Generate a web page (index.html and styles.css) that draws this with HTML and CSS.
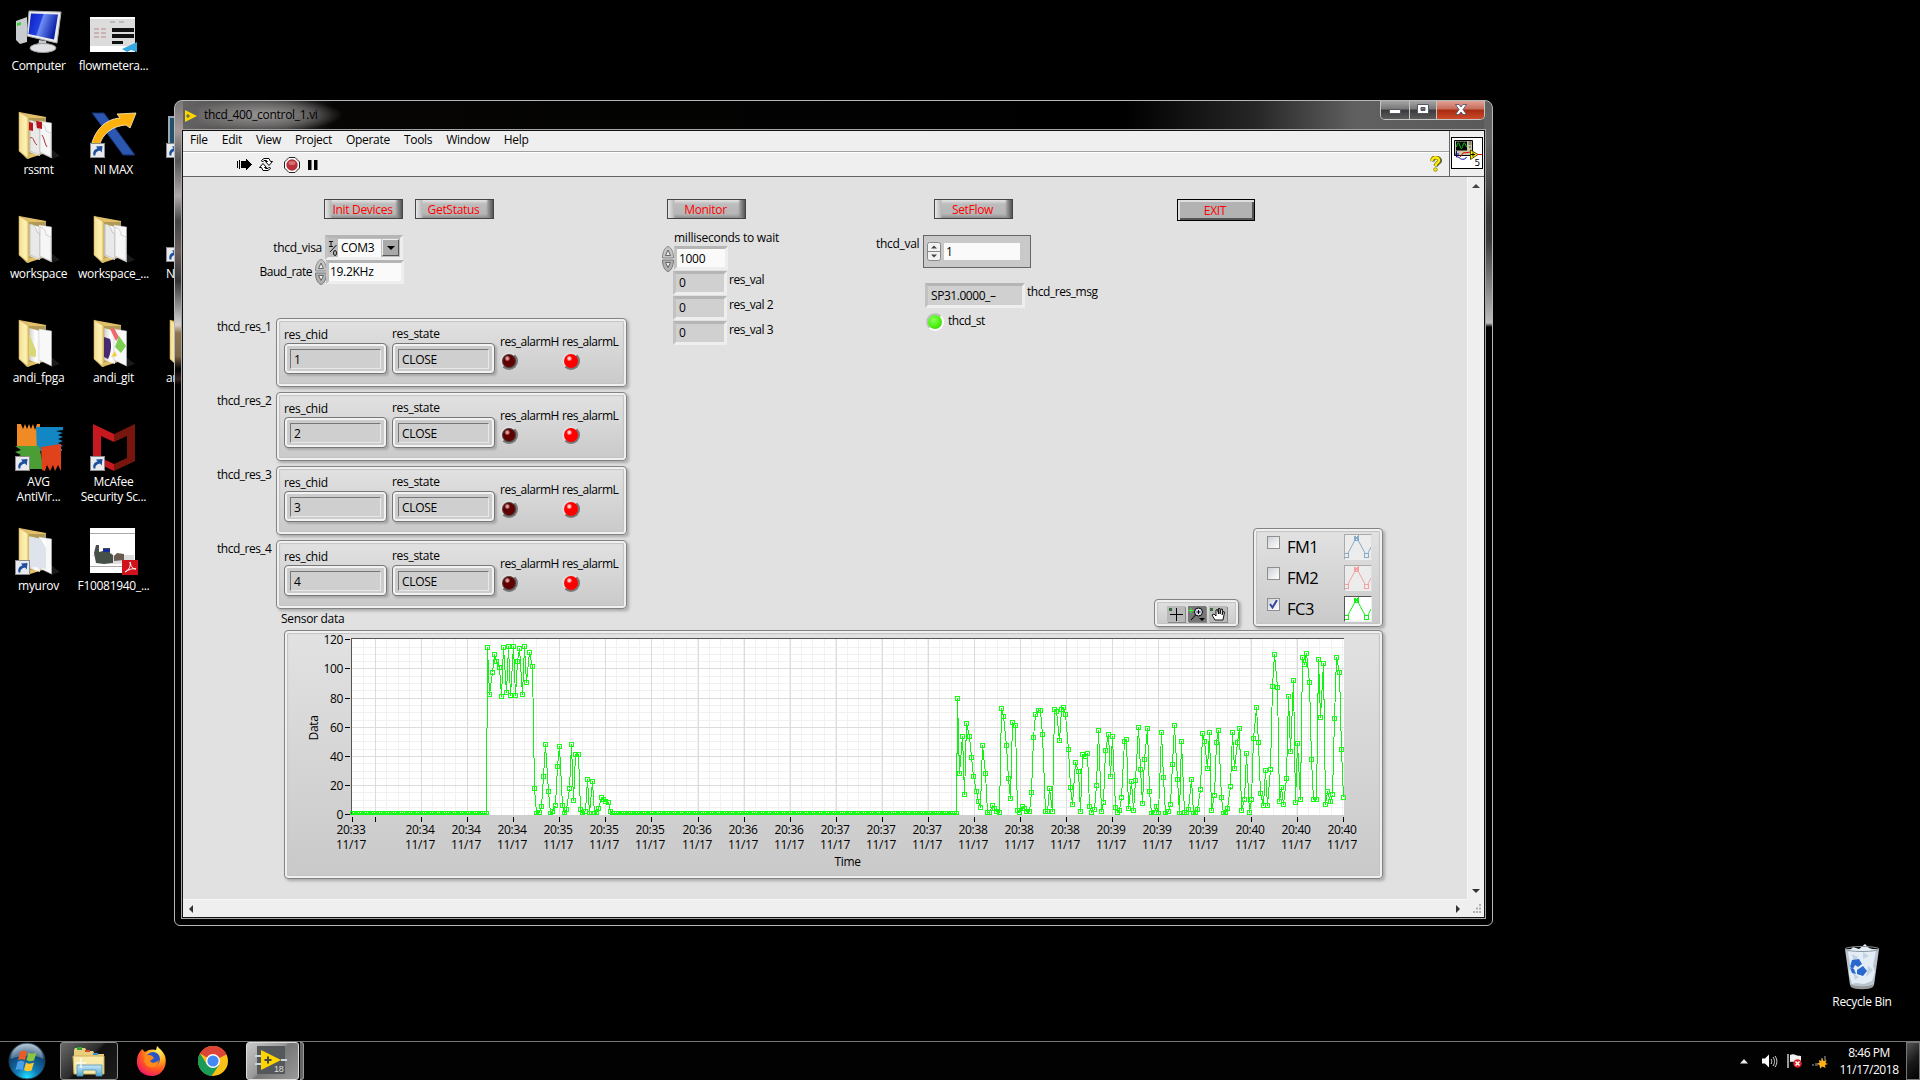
FILE: index.html
```html
<!DOCTYPE html>
<html lang="en">
<head>
<meta charset="utf-8">
<title>thcd_400_control_1.vi</title>
<link rel="stylesheet" href="styles.css">
</head>
<body>
<svg class="defs" width="0" height="0">
  <defs>
    <linearGradient id="gFold" x1="0" x2="1"><stop offset="0" stop-color="#f3dd94"/><stop offset=".7" stop-color="#fdf3b4"/><stop offset="1" stop-color="#d8b65c"/></linearGradient>
    <linearGradient id="gPage" x1="0" x2="1"><stop offset="0" stop-color="#cfcfcf"/><stop offset=".6" stop-color="#fff"/><stop offset="1" stop-color="#ececec"/></linearGradient>
    <linearGradient id="gScr" x1="0" x2="1" y2=".3"><stop offset="0" stop-color="#0a1cc0"/><stop offset=".45" stop-color="#2340e0"/><stop offset=".5" stop-color="#6f8df5"/><stop offset="1" stop-color="#0b1fa8"/></linearGradient>
    <radialGradient id="gOrb" cx=".5" cy=".95" r=".9"><stop offset="0" stop-color="#1fe0ff"/><stop offset=".35" stop-color="#1277b4"/><stop offset=".75" stop-color="#10426f"/><stop offset="1" stop-color="#8fa9bd"/></radialGradient>
    <radialGradient id="gFox" cx=".75" cy=".15" r=".95"><stop offset="0" stop-color="#fff36b"/><stop offset=".35" stop-color="#ffb01f"/><stop offset=".65" stop-color="#ff5a1f"/><stop offset="1" stop-color="#f0156a"/></radialGradient>
    <linearGradient id="gAero" x1="0" x2="0" y1="0" y2="1"><stop offset="0" stop-color="#c9e8f7"/><stop offset="1" stop-color="#4fa6d3"/></linearGradient>
    <symbol id="shortcut" viewBox="0 0 15 15"><rect x=".5" y=".5" width="14" height="14" fill="#e8eaee" stroke="#8b8b8b"/><path d="M3.500 12.500C2.500 8 5 6 7.500 5.500L6 3.500l6.500-.5-.8 6.500-1.700-2C7.500 8 5 9.500 5.500 12.500Z" fill="#1c4f9e"/></symbol>
    <symbol id="folder" viewBox="0 0 48 48"><path d="M36 38l9 7-9 3z" fill="#1a1a1a"/><path d="M4 1l27 5v36L12 48 4 40Z" fill="#e2c069"/><path d="M14 7l17 0v34l-17 2z" fill="#b09a55"/><path d="M14 9l11 3v33l-11-4z" fill="url(#gPage)"/><path d="M24 10l12.500 2v35L24 41Z" fill="#f8f8f8" stroke="#c9c9c9" stroke-width=".5"/><path d="M4 1l10 6v41L4 40Z" fill="url(#gFold)" stroke="#c9a552" stroke-width=".6"/></symbol>
    <symbol id="sheet" viewBox="0 0 48 48"><path d="M15 9c4 0 6 3 7 8l3 2v25l-10-4z" fill="#e9e9e9" stroke="#aaa" stroke-width=".6"/><path d="M25 12c4 1 6 4 6 8l5 2v24l-11-5z" fill="#f6f6f6" stroke="#b9b9b9" stroke-width=".6"/></symbol>
  </defs>
</svg>

<main class="desktop">
  <div class="icons">
    <div class="icon"><svg width="48" height="48"><path d="M1 14l11-4v25l-7 2-4-4z" fill="#c9cccf"/><path d="M2 16l4-1v3l-4 1z" fill="#3bd23b"/><path d="M14 4l32 1-4 31-30-7z" fill="#e9ebee" stroke="#aaa"/><path d="M16 6.500l27 1-4 25-25.500-5.500z" fill="url(#gScr)"/><path d="M24 33l7 1 1 5h-9z" fill="#c5c8cc"/><ellipse cx="28" cy="41" rx="13" ry="4.500" fill="#dfe1e4" stroke="#999"/></svg><span>Computer</span></div>
    <div class="icon"><svg width="48" height="48"><rect y="10" width="45" height="35" fill="#fff"/><path d="M0 12h45v27H0z" fill="#dcdcdc"/><path d="M22 21h22v4H22zM22 27h22v4H22zM22 34h11v3H22z" fill="#111"/><path d="M4 22h12M4 26h12M4 30h12" stroke="#b88" stroke-dasharray="5 2"/><path d="M20 15h18" stroke="#999" stroke-dasharray="5 4"/><path d="M32 42l15-7v10l-6-2-4 2z" fill="#35a8e0"/></svg><span>flowmetera...</span></div>
    <div class="icon"></div>

    <div class="icon"><svg width="48" height="48"><use href="#folder"/><use href="#sheet"/><path d="M14 11l4 1v8l-4-1zM21 10l6 1v7l-5-1z" fill="#b5141d"/><path d="M15 27c4-2 3 4 7 7M27 24c3 4 2 8 5 12" fill="none" stroke="#a33"/></svg><span>rssmt</span></div>
    <div class="icon"><svg width="48" height="48"><path d="M2 2h12l31 42H33Z" fill="#2c57b0" stroke="#15306e"/><path d="M1 36C4 20 15 8 30 7l-3-4 19-1-6 15-4-3C23 15 12 22 9 36Z" fill="#fdb10c" stroke="#fff2cc" stroke-width=".8"/><use href="#shortcut" x="0" y="32" width="15" height="15"/></svg><span>NI MAX</span></div>
    <div class="icon icon-part"><svg width="48" height="48"><path d="M2 5h20v30H2z" fill="#9aa8b5"/><path d="M4 7h16v26H4z" fill="#24506a"/><use href="#shortcut" x="0" y="32" width="15" height="15"/></svg></div>

    <div class="icon"><svg width="48" height="48"><use href="#folder"/><use href="#sheet"/></svg><span>workspace</span></div>
    <div class="icon"><svg width="48" height="48"><use href="#folder"/><use href="#sheet"/></svg><span>workspace_...</span></div>
    <div class="icon icon-part"><svg width="48" height="48"><use href="#shortcut" x="0" y="32" width="15" height="15"/></svg><span>NI VIS</span></div>

    <div class="icon"><svg width="48" height="48"><use href="#folder"/><path d="M14 15l7 16v7l-7-1z" fill="#d8d878"/></svg><span>andi_fpga</span></div>
    <div class="icon"><svg width="48" height="48"><use href="#folder"/><path d="M14 18l6 2c2 6 1 14-2 20l-4-2z" fill="#472a70"/><path d="M20 10l4-1 5 9-3 4z" fill="#f06a6a"/><path d="M29 17l7 10-5 7-6-6z" fill="#7ccf52"/><path d="M21 38l4-6 2 5z" fill="#f0d040"/></svg><span>andi_git</span></div>
    <div class="icon icon-part"><svg width="48" height="48"><use href="#folder"/></svg><span>andi</span></div>

    <div class="icon"><svg width="48" height="48"><path d="M2 1h4l2 5 2-5 2 5 2-5 2 5 2-5 2 6 2-6h3l-1 22H2z" fill="#f08a25"/><path d="M21 4h27v3l-7 1 7 2-5 2 5 2-5 2 5 2-5 2 5 3-6 2 5 1v2H22z" fill="#1386c4"/><path d="M0 23h24l5 23H0l5-3-5-2 6-3-6-3 6-3-6-3 6-2z" fill="#4a9e35"/><path d="M26 24l20-3v27l-3-6-3 6-2-6-3 6-3-6-2 6-3-1z" fill="#e0421c"/><use href="#shortcut" x="0" y="33" width="15" height="15"/></svg><span>AVG<br>AntiVir...</span></div>
    <div class="icon"><svg width="48" height="48"><path d="M3 1l21 10v8L11 13v22l13 6v7L3 38z" fill="#c5181f"/><path d="M45 1L24 11v8l13-6v22l-13 6v7l21-10z" fill="#77160f"/><use href="#shortcut" x="0" y="33" width="15" height="15"/></svg><span>McAfee<br>Security Sc...</span></div>
    <div class="icon"></div>

    <div class="icon"><svg width="48" height="48"><use href="#folder"/><path d="M14 10l12 2 5 6 0 24-17-3z" fill="#dfe3ec"/><path d="M26 12l5 2v7z" fill="#fff"/><use href="#shortcut" x="0" y="33" width="15" height="15"/></svg><span>myurov</span></div>
    <div class="icon"><svg width="48" height="48"><rect y="1" width="45" height="45" fill="#fff"/><path d="M0 6.500h45M0 39.500h45" stroke="#aaa"/><path d="M1 28h43v8l-20 1z" fill="#dcdcdc"/><path d="M4 26l2-8h3v7l4-1v-3h7v5l3 2v8l-9 1-8-1z" fill="#465048"/><path d="M24 29l3-3 7 1v6l-10 1z" fill="#6a5a50"/><path d="M13 22h7v3h-7z" fill="#1a2aa0"/><path d="M32 33h16v15H32z" fill="#d0121b"/><path d="M35 45c4-2 6-6 5-10 1 5 3 7 6 7-4-1-8 1-11 3z" fill="none" stroke="#fff"/></svg><span>F10081940_...</span></div>
    <div class="icon"></div>
  </div>

  <div class="bin"><svg width="48" height="48"><path d="M7 6h34l-5 36c-4 4-20 4-24 0z" fill="#b9c6d0"/><path d="M10 9l5-5 6 2 6-5 4 4 7 2-3 16 2 6-3 9-8 3-8-1-4 1-3-10 1-10z" fill="#e4edf6"/><path d="M14 11l6 3-4 6zM25 9l6 4-6 3zM30 23l5 4-7 7zM15 30l6 4-4 3z" fill="#c3d3e2"/><path d="M14 17l7-1 3 5-4 3-3-2-2 4-3-2zM19 27l6-4 4 5-4 5-6-2zM12 25l4 1 2 5-4-1z" fill="#2868cf"/><path d="M12 41c5 3 19 3 24 0l-1 3c-4 3-18 3-22 0z" fill="#9a9a9a"/><ellipse cx="24" cy="6" rx="17" ry="2.500" fill="none" stroke="#8a949c"/></svg><span>Recycle Bin</span></div>

  <section class="window">
    <header class="titlebar">
      <svg class="app" width="16" height="16"><rect width="16" height="16" fill="#616264"/><path d="M2 2l12 6L2 14z" fill="#ffd500"/><path d="M3 8h4M5 6v4" stroke="#555"/></svg>
      <h1>thcd_400_control_1.vi</h1>
      <div class="caption">
        <i class="min"><svg width="12" height="14"><rect x=".5" y="7.500" width="11" height="4" fill="#fff" stroke="#556"/></svg></i>
        <i class="max"><svg width="12" height="12"><path d="M.5 1.500h11v9H.5zM4 4.500h4v3H4z" fill="#fff" fill-rule="evenodd" stroke="#556"/></svg></i>
        <i class="close"><svg width="12" height="11"><path d="M.5.5h3.500L6 3 8 .5h3.500L8 5.500l3.500 5H8L6 8l-2 2.500H.5L4 5.500z" fill="#fff" stroke="#444a66" stroke-width=".8"/></svg></i>
      </div>
    </header>
    <div class="client">
      <div class="head">
        <div class="bars">
          <nav class="menu"><span>File</span><span>Edit</span><span>View</span><span>Project</span><span>Operate</span><span>Tools</span><span>Window</span><span>Help</span></nav>
          <div class="tools">
            <svg width="15" height="15" shape-rendering="crispEdges"><path d="M.5 4v7M2.500 3v9M4.500 4v7" stroke="#000"/><path d="M5 4h4V1l6 6.500L9 14v-3H5z"/></svg>
            <svg width="16" height="15" fill="#fff" stroke="#000"><path d="M3.500 3.500L6 1.500h5l1.500 3h2l-3.500 4-3.500-4h2L8.500 3.500H6L4.500 5z"/><path d="M12.500 11.500L10 13.500H5l-1.500-3H1.500L5 6.500l3.500 4h-2l1 1H10l1.500-1.500z"/></svg>
            <svg width="16" height="16"><path d="M5 .5h6L15.500 5v6L11 15.500H5L.5 11V5z" fill="#fff" stroke="#222"/><circle cx="8" cy="8" r="5.700" fill="#ba3038"/><ellipse cx="8" cy="6" rx="3.500" ry="2" fill="#d27077"/></svg>
            <svg width="10" height="10"><path d="M0 0h3.500v10H0zM6 0h3.500v10H6z"/></svg>
            <svg class="help" width="12" height="16"><path d="M3 5.500C3 0 11 1 10.500 5 10 7.500 6.500 7 6.500 10.500" fill="none" stroke="#555" stroke-width="3"/><path d="M2 5C2-.5 9.500.5 9 4.500 8.800 7 5.500 7 5.500 10" fill="none" stroke="#7a7200" stroke-width="3.600"/><path d="M2 5C2 0 9.500 1 9 4.500 8.800 7 5.500 7 5.500 10" fill="none" stroke="#ffee00" stroke-width="2.400"/><circle cx="5.500" cy="13.500" r="1.800" fill="#ffee00" stroke="#7a7200" stroke-width=".7"/></svg>
          </div>
        </div>
        <div class="vi">
          <svg width="32" height="32"><rect x=".5" y=".5" width="31" height="31" fill="#fff" stroke="#000"/><path d="M3.500 3.500h18v15h-18z" fill="#c9c7a5" stroke="#000"/><path d="M5 4.500h11v9H5z"/><path d="M5.500 10c1.500-6 2.500-5 3.500-1s2 3 3-1 2-2 3.500 2" fill="none" stroke="#12d012"/><path d="M17.500 5h3M17.500 7h3M18 10h2" stroke="#444"/><path d="M5.500 14v6h2c2 3 7 3 8 0M4 17h4" fill="none" stroke="#0a0a90"/><path d="M9 20l3-4 8-1M26 17.500h5" fill="none" stroke="#e00000"/><path d="M19.500 13l7.500 4.500-7.500 5z" fill="#ffee00" stroke="#555500"/><path d="M20 17.500h4M22 15.500v4" stroke="#000"/><text x="23.500" y="29" class="vi-num">5</text></svg>
        </div>
      </div>

      <div class="body">
        <div class="panel">
          <div class="upper">
            <div class="col-a">
              <div class="btns"><button>Init Devices</button><button>GetStatus</button></div>
              <div class="visa"><label>thcd_visa</label><div class="combo"><svg width="10" height="18"><path d="M1 2.500h4M3 2v5M1 7.500h4M8.500 6L2 13" stroke="#111" fill="none"/><ellipse cx="7" cy="14" rx="1.500" ry="2.500" fill="none" stroke="#111"/></svg><b>COM3</b><i><svg width="8" height="4"><path d="M0 0h8L4 4z"/></svg></i></div></div>
              <div class="baud"><label>Baud_rate</label><svg class="spin" width="12" height="26"><use href="#spin"/></svg><div class="field white">19.2KHz</div></div>
              <div class="clusters">
                <div class="res"><label>thcd_res_1</label><div class="cluster"><div class="c-id"><label>res_chid</label><p><b>1</b></p></div><div class="c-st"><label>res_state</label><p><b>CLOSE</b></p></div><div class="c-al"><label>res_alarmH</label><i class="led dark"></i></div><div class="c-al"><label>res_alarmL</label><i class="led red"></i></div></div></div>
                <div class="res"><label>thcd_res_2</label><div class="cluster"><div class="c-id"><label>res_chid</label><p><b>2</b></p></div><div class="c-st"><label>res_state</label><p><b>CLOSE</b></p></div><div class="c-al"><label>res_alarmH</label><i class="led dark"></i></div><div class="c-al"><label>res_alarmL</label><i class="led red"></i></div></div></div>
                <div class="res"><label>thcd_res_3</label><div class="cluster"><div class="c-id"><label>res_chid</label><p><b>3</b></p></div><div class="c-st"><label>res_state</label><p><b>CLOSE</b></p></div><div class="c-al"><label>res_alarmH</label><i class="led dark"></i></div><div class="c-al"><label>res_alarmL</label><i class="led red"></i></div></div></div>
                <div class="res"><label>thcd_res_4</label><div class="cluster"><div class="c-id"><label>res_chid</label><p><b>4</b></p></div><div class="c-st"><label>res_state</label><p><b>CLOSE</b></p></div><div class="c-al"><label>res_alarmH</label><i class="led dark"></i></div><div class="c-al"><label>res_alarmL</label><i class="led red"></i></div></div></div>
              </div>
              <label class="sensor">Sensor data</label>
            </div>

            <div class="col-b">
              <button>Monitor</button>
              <label class="wait">milliseconds to wait</label>
              <div class="row"><svg class="spin" width="12" height="26"><g id="spin"><path d="M6 .5c3.500 1 5.500 6 5.500 11.500H.5C.5 6.500 2.500 1.500 6 .5z" fill="#c4c4c4" stroke="#8a8a8a"/><path d="M.5 14h11c0 5.500-2 10.500-5.500 11.500C2.500 24.500.5 19.500.5 14z" fill="#b0b0b0" stroke="#777"/><path d="M3.500 9.500L6 4l2.500 5.500z" fill="#eee" stroke="#666"/><path d="M3.500 16.500h5L6 21.500z" fill="#eee" stroke="#666"/></g></svg><div class="field white">1000</div></div>
              <div class="row"><div class="field">0</div><label>res_val</label></div>
              <div class="row"><div class="field">0</div><label>res_val 2</label></div>
              <div class="row"><div class="field">0</div><label>res_val 3</label></div>
            </div>

            <div class="col-c">
              <button>SetFlow</button>
              <div class="val"><label>thcd_val</label><div class="valbox"><svg width="14" height="19"><rect x=".5" y=".5" width="13" height="18" rx="2" fill="#f2f2f2" stroke="#888"/><path d="M1 9.500h12" stroke="#888"/><path d="M4 6.500h6L7 3.500zM4 12.500h6L7 15.500z" fill="#444"/></svg><b>1</b></div></div>
              <div class="msg"><div class="field">SP31.0000_&ndash;</div><label>thcd_res_msg</label></div>
              <div class="st"><i class="led green"></i><label>thcd_st</label></div>
            </div>

            <div class="col-d">
              <button class="exit">EXIT</button>
              <div class="dock">
                <div class="plate palette">
                  <i><svg width="18" height="16"><rect x="2" y="2" width="3" height="3" fill="#3a6a3a"/><path d="M3 8.500h13M9.500 2v13" stroke="#000"/></svg></i>
                  <i class="on"><svg width="18" height="16"><path d="M3 2v5M.5 4.500h5" stroke="#3f3"/><circle cx="10.500" cy="6" r="4" fill="#dde" stroke="#000"/><path d="M8.500 6h4M10.500 4v4M7.500 9L3 14" stroke="#000"/><path d="M11 12h6l-3 3z"/></svg></i>
                  <i><svg width="18" height="16"><rect x="1" y="2" width="3" height="3" fill="#3a6a3a"/><path d="M6 14L3 9l2-1 2 2V4l1.500-.5L9.500 8V2.500H11V8l1-5 1.500.3-.3 5.500 1-3.300 1.300.5L14 14z" fill="#fff" stroke="#000" stroke-width=".9"/></svg></i>
                </div>
                <div class="plate legend">
                  <div><i class="check"></i><span>FM1</span><svg class="thumb" width="28" height="26" color="#86aac8"><use href="#wave"/></svg></div>
                  <div><i class="check"></i><span>FM2</span><svg class="thumb" width="28" height="26" color="#f2a0a0"><use href="#wave"/></svg></div>
                  <div><i class="check"><svg width="9" height="9"><path d="M1 4l2.500 3.500L8 0" fill="none" stroke="#35479b" stroke-width="2"/></svg></i><span>FC3</span><svg class="thumb lit" width="28" height="26" color="#14f014"><g id="wave" fill="none" stroke="currentColor"><path d="M3 18L9.500 6M13.500 6L20 18M23 18L26 12"/><path d="M0 18.500h3.500v4H0M19.500 18.500h4v4h-4zM9.500 1v4.500h4V1l-4 4m0-4l4 4" shape-rendering="crispEdges"/></g></svg></div>
                </div>
              </div>
            </div>
          </div>
          <div class="plate chart"><svg id="chart" width="1097" height="247"></svg></div>
        </div>
        <div class="vscroll"><svg width="8" height="5"><path d="M0 4l4-4 4 4z" fill="#444"/></svg><svg width="8" height="5"><path d="M0 0h8L4 4z" fill="#333"/></svg></div>
      </div>
      <div class="hscroll"><svg width="5" height="8"><path d="M4 0v8L0 4z" fill="#333"/></svg><svg width="5" height="8"><path d="M0 0v8l4-4z" fill="#333"/></svg><svg width="12" height="12"><path d="M8 2h2M5 5.500h2M8 5.500h2M2 9h2M5 9h2M8 9h2" stroke="#b0b0b0" stroke-width="2"/></svg></div>
    </div>
  </section>
</main>

<footer class="taskbar">
  <svg class="orb" width="38" height="38"><circle cx="19" cy="19" r="18" fill="url(#gOrb)" stroke="#243b50"/><path d="M3 17C4 6 12 2 19 2s15 4 16 15c-8-5-24-4-32 0z" fill="#fff" opacity=".3"/><path d="M12 10c3-2 5-1 7 0l-2 8c-3-1-5-1-7 0z" fill="#ee5a24"/><path d="M20.500 10.500c3 2 5 1 8 0l-2.500 8c-3 1-5 1-7.500-.5z" fill="#8cc63e"/><path d="M9.500 20c3-2 5-1 7 0l-2 8c-3-1-4-1-7 0z" fill="#4a9fe8"/><path d="M18 20.500c3 2 5 1 8 0l-2.500 8c-3 1-5 1-7.500-.5z" fill="#fdc82f"/></svg>
  <div class="task explorer"><svg width="34" height="32"><path d="M3 3h10l2 3h6l2 3h9v20H2V5z" fill="#e9cf7c"/><path d="M1 11h31v18H2z" fill="#f8e9a8" stroke="#cfae58"/><path d="M5 2h5v3H5z" fill="#2ea43b"/><path d="M13 5h5v2h-5z" fill="#d5462d"/><path d="M21 8h5v2h-5z" fill="#3b8de0"/><path d="M5 31V20h25v11h-6v-6H11v6z" fill="url(#gAero)" stroke="#4d93b8" stroke-width=".8"/><path d="M9 13v10M4 18h10" stroke="#fff" stroke-width="1.500" opacity=".8"/></svg></div>
  <svg class="fox" width="32" height="32"><path d="M3 8l3-4 3 3c4-3 8-3 11-2l1-4c3 3 6 5 8 10 3 10-3 20-13 20S0 24 1 15c0-3 1-5 2-7z" fill="url(#gFox)"/><circle cx="17" cy="14" r="7" fill="#2a55c8"/><path d="M9 11c4-2 7-1 9 2l-4 3c2 3 6 2 9-1-1 6-5 8-9 7-5-1-7-6-5-11z" fill="#ff8a1a"/></svg>
  <svg class="chrome" width="30" height="30" viewBox="0 0 30 30"><circle cx="15" cy="15" r="15" fill="#fbc116"/><path d="M15 15L2 7.500A15 15 0 0 1 28.500 8.500z" fill="#dc4437"/><path d="M2 7.500A15 15 0 0 0 13.500 30L21.500 18.500 9 18.500z" fill="#1a9b57"/><path d="M15 8.500h13.200A15 15 0 0 0 15 0z" fill="#dc4437"/><circle cx="15" cy="15" r="7" fill="#fff"/><circle cx="15" cy="15" r="5.600" fill="#4587f3"/></svg>
  <div class="task labview"><svg width="32" height="30"><rect x="2" width="28" height="28" fill="#55585b"/><path d="M0 10h6M0 18h6M26 14h6" stroke="#c9d6de" stroke-width="2"/><path d="M6 4l20 10L6 24z" fill="#ffd500"/><path d="M9.500 14h7M13 10.500v7" stroke="#444" stroke-width="2"/><text x="19" y="26" class="lv-num">18</text></svg></div>
  <i class="stack"></i>
  <div class="tray">
    <svg width="8" height="5"><path d="M0 4.500L4 0l4 4.500z" fill="#e4e8f0"/></svg>
    <svg width="16" height="15"><path d="M0 4.500h3l4-4v13l-4-4H0z" fill="#fff"/><path d="M9 5c1 1.500 1 3.500 0 5M11 3c2 3 2 6 0 9M13 2c2.500 3.500 2.500 7.500 0 11" stroke="#ddd" fill="none"/></svg>
    <svg width="16" height="16"><path d="M1 1v14" stroke="#fff" stroke-width="1.200"/><path d="M3 2c4-2 5 1 11 1v7c-6 0-7-2-11-1z" fill="#f2f2f2"/><circle cx="10.500" cy="10.500" r="4.300" fill="#d5202a"/><path d="M8.500 8.500l4 4M12.500 8.500l-4 4" stroke="#fff" stroke-width="1.500"/></svg>
    <svg width="16" height="16"><path d="M0 11h2v2H0zM3 10h3v3H3zM9 5h2v4H9zM12 3h2v4h-2z" fill="#555"/><path d="M10 5l1.500 3 3-1-1 3 2.500 1-3 1 .5 3-3-1.500L8 15.500 7.500 12 5 11l2.500-1.500L7 7l2.500 1z" fill="#ffb018"/></svg>
    <time>8:46 PM<br>11/17/2018</time>
    <i class="peek"></i>
  </div>
</footer>
<script src="chart.js"></script>
</body>
</html>
```
FILE: styles.css
```css
* { box-sizing: border-box; }
body {
  margin: 0;
  width: 1920px;
  height: 1080px;
  overflow: hidden;
  background: #000;
  color: #000;
  font: 12px/16px "Open Sans", "Noto Sans", sans-serif;
  letter-spacing: -0.3px;
  display: flex;
  flex-direction: column;
}
svg { display: block; flex: none; }
.defs { position: absolute; }
i, b { font-style: normal; font-weight: 400; }
p { margin: 0; }
label, span, b, button, .field { white-space: nowrap; }

.desktop { position: relative; flex: 1; }
.icons {
  display: grid;
  grid-template-columns: 75px 75px 75px;
  grid-auto-rows: 104px;
  padding: 7px 0 0 1px;
  width: 226px;
}
.icon, .bin {
  display: flex;
  flex-direction: column;
  align-items: center;
  gap: 3px;
  color: #fff;
  text-align: center;
  line-height: 15px;
}
.icon-part { align-items: flex-start; padding-left: 15px; }
.bin { position: absolute; left: 1826px; top: 943px; width: 72px; gap: 3px; }

/* window frame */
.window {
  position: absolute;
  left: 174px;
  top: 100px;
  width: 1319px;
  height: 826px;
  border: 1px solid #b5b8b8;
  border-radius: 8px 8px 6px 6px;
  padding: 0 7px 7px;
  background:
    linear-gradient(#5f5f5f 0, #666 40px, #353535 115px, #3c3c3c 140px, #bdbdbd 222px, #000 226px) right 0 top 0 / 8px 100% no-repeat,
    linear-gradient(#777 0, #a89a9a 30px, #555 60px, #b0a8a8 95px, #444 120px, #6b5e5e 150px, #333 180px, #b5b5b5 215px, #d8d0cc 224px, #8c7351 232px, #7d6748 255px, #000 268px, #322 278px, #000 284px) left 0 top 0 / 8px 100% no-repeat,
    radial-gradient(ellipse 80px 17px at 88px 14px, #9a9797 0, #84818190 65%, transparent 100%) 0 0 / 220px 29px no-repeat,
    linear-gradient(90deg, #6a6767 0, #4c4a4a 70px, #3c3a3a 110px, #060504 158px, #000 950px, #262626 1080px, #606060 1180px, #5a5a5a) 0 0 / 100% 29px no-repeat,
    #000;
}
.titlebar { display: flex; align-items: center; height: 29px; padding: 0 0 0 1px; }
h1 { margin: -1px 0 0 5px; font: inherit; }
.caption {
  display: flex;
  align-self: flex-start;
  height: 19px;
  margin-left: auto;
  border: 1px solid #c4c4c4;
  border-top: 0;
  border-radius: 0 0 5px 5px;
  overflow: hidden;
}
.caption i {
  display: flex;
  align-items: center;
  justify-content: center;
  padding-bottom: 2px;
  border-right: 1px solid #c4c4c4;
  background: linear-gradient(#a5a5a5, #777 45%, #3a3a3a 50%, #5b5b5b 100%);
}
.min { width: 29px; }
.max { width: 27px; }
.caption .close { width: 47px; border: 0; background: linear-gradient(#e0a294, #c66a58 45%, #a82a10 50%, #cc4a28 100%); }

.client {
  height: 788px;
  border: 1px solid #111;
  outline: 1px solid #a4a4a4;
  background: #efefef;
}
.head { display: flex; height: 46px; border-bottom: 1px solid #646464; }
.bars { flex: 1; border-right: 1px solid #646464; }
.menu { display: flex; height: 21px; border-bottom: 1px solid #a0a0a0; padding: 1px 0 0 7px; gap: 14px; }
.tools { display: flex; align-items: center; height: 24px; padding-left: 54px; border-top: 1px solid #fff; }
.tools svg { margin-right: 6px; }
.tools svg:nth-child(2) { margin-right: 10px; }
.tools svg:nth-child(3) { margin-right: 8px; }
.tools .help { margin: -2px 7px 0 auto; }
.vi { width: 34px; padding: 6px 0 0 1px; }
.vi-num { font: 9px "DejaVu Sans", sans-serif; }

.body { display: flex; height: 723px; }
.panel { width: 1285px; background: #e1e1e1; border-right: 1px solid #f6f6f6; border-bottom: 1px solid #f6f6f6; }
.vscroll {
  width: 16px;
  display: flex;
  flex-direction: column;
  justify-content: space-between;
  align-items: center;
  padding: 7px 0 6px;
  background: #efefef;
}
.hscroll { display: flex; align-items: center; height: 17px; padding: 0 1px 0 6px; background: #efefef; }
.hscroll svg:nth-child(2) { margin: 0 10px 0 auto; }

/* front panel controls */
.upper { display: grid; grid-template-columns: 477px 210px 280px 318px; height: 453px; padding-top: 22px; }
button {
  display: block;
  width: 79px;
  height: 20px;
  padding: 2px 2px 0 0;
  border: 1px solid #444;
  background: linear-gradient(90deg, #e8e8e8, #b8b8b8 6px, transparent 7px, transparent 70px, #8a8a8a 73px, #555 77px), linear-gradient(#e4e4e4, #bdbdbd 4px, #b6b6b6 14px, #8d8d8d);
  color: #f00;
  font: inherit;
  letter-spacing: inherit;
  text-align: center;
}
.exit {
  width: 78px;
  height: 22px;
  border-color: #000;
  background: #b2b2b2;
  box-shadow: inset 2px 2px #dedede, inset -2px -2px #555;
}
.btns { display: flex; gap: 12px; padding-left: 141px; }
.visa { display: flex; height: 25px; margin-top: 16px; }
.visa label { width: 139px; text-align: right; padding-top: 5px; }
.combo, .field {
  border: 3px solid;
  border-color: #b5b5b5 #eee #eee #c2c2c2;
  background: #d0d0d0;
}
.combo { display: flex; width: 78px; height: 25px; margin-left: 3px; background: #bdbdbd; align-items: center; }
.combo b { width: 43px; height: 18px; padding: 1px 0 0 3px; background: #fafafa; }
.combo i { width: 17px; height: 17px; margin-left: 1px; border: 1px solid; border-color: #eee #555 #555 #eee; background: #a9a9a9; display: flex; align-items: center; justify-content: center; }
.baud { display: flex; height: 24px; }
.baud label { width: 129px; text-align: right; padding-top: 4px; letter-spacing: -0.5px; }
.baud .spin { margin: -1px 0 0 3px; }
.baud .field { width: 78px; margin-left: -1px; padding-left: 1px; }
.field { height: 24px; line-height: 18px; padding-left: 3px; }
.white { background: #fafafa; }

.clusters { display: flex; flex-direction: column; gap: 5px; margin-top: 34px; }
.res { display: flex; padding-left: 34px; height: 69px; }
.res > label { width: 59px; letter-spacing: -0.5px; padding-top: 1px; }
.cluster, .plate {
  border: 1px solid #838383;
  border-radius: 4px;
  background: linear-gradient(#e2e2e2, #c9c9c9);
  box-shadow: inset 0 0 0 2px #f0f0f0, inset 0 0 1px 3px #c4c4c4, 2px 2px 3px #aaa;
}
.cluster { display: flex; width: 351px; padding: 7px 0 0 7px; }
.cluster label { display: block; height: 17px; }
.c-id { width: 108px; padding-top: 1px; }
.c-st { width: 108px; }
.c-al { width: 62px; padding-top: 8px; letter-spacing: -0.5px; }
.c-al label { height: 18px; }
.cluster p {
  width: 103px;
  height: 31px;
  padding: 5px;
  border: 1px solid #777;
  border-radius: 4px;
  background: #ccc;
  box-shadow: inset 0 0 0 2px #f2f2f2, 2px 2px 2px #aaa;
}
.c-id p { margin-top: -1px; }
.cluster b { display: block; height: 20px; padding-left: 3px; line-height: 19px; border: 1px solid; border-color: #777 #e8e8e8 #e8e8e8 #777; background: #cfcfcf; }
.led { display: block; width: 18px; height: 18px; border-radius: 50%; border: 2px solid; border-color: #ddd #777 #777 #ddd; box-shadow: inset 0 0 0 1px #4a4040; }
.dark { background: radial-gradient(circle at 38% 32%, #d9a0a0 0 1px, #600000 3px); }
.red { background: radial-gradient(circle at 38% 32%, #ffd0d0 0 1px, #f00 3px); box-shadow: none; }
.green { background: radial-gradient(circle at 40% 35%, #8bff60, #4df510 50%, #35b80c); border-color: #c0c0c0 #fff #fff #c0c0c0; box-shadow: none; }
.sensor { display: block; margin-top: 2px; padding-left: 98px; }

.col-b button { margin-left: 7px; }
.wait { display: block; margin: 11px 0 0 14px; letter-spacing: -0.25px; }
.row { display: flex; height: 24px; margin-bottom: 1px; padding-left: 13px; }
.row .spin { margin: 0 0 0 -11px; }
.row .spin + .field { margin-left: 0; padding-left: 2px; line-height: 19px; }
.row .field { width: 54px; }
.row label { margin: 1px 0 0 2px; letter-spacing: -0.45px; }
.col-c > button { margin-left: 64px; }
.val { display: flex; margin-top: 16px; padding-left: 6px; }
.val label { width: 47px; padding-top: 1px; }
.valbox { display: flex; align-items: center; width: 108px; height: 33px; padding-left: 3px; border: 1px solid #666; background: #c9c9c9; }
.valbox b { width: 76px; height: 17px; margin-left: 3px; padding-left: 2px; line-height: 18px; background: #fafafa; }
.msg { display: flex; margin-top: 15px; padding-left: 55px; }
.msg .field { width: 100px; height: 25px; line-height: 19px; letter-spacing: -0.45px; }
.msg label { margin: 1px 0 0 2px; letter-spacing: -0.45px; }
.st { display: flex; align-items: center; margin-top: 5px; padding-left: 56px; gap: 4px; letter-spacing: -0.45px; }
.st label { margin-top: -2px; }

.col-d { display: flex; flex-direction: column; justify-content: space-between; }
.exit { margin-left: 27px; }
.dock { display: flex; align-items: flex-end; gap: 14px; padding: 0 0 3px 4px; }
.palette { display: flex; gap: 3px; width: 85px; height: 28px; padding: 6px 0 0 12px; }
.palette i { width: 18px; height: 16px; background: #b9b9b9; box-shadow: 1px 1px #888; }
.palette .on { background: #777; }
.legend { width: 130px; height: 99px; padding: 5px 10px 0 13px; }
.legend div { display: flex; height: 31px; }
.legend span { margin: 3px auto 0 7px; font-size: 16.5px; line-height: 20px; letter-spacing: -0.5px; }
.check { width: 13px; height: 13px; margin-top: 2px; padding: 1px; border: 1px solid #8e8f8f; background: linear-gradient(135deg, #ccd0d6, #fff); }
.thumb { border: 1px solid #aaa; border-right-color: #ddd; border-bottom-color: #eee; background: #ececec; }
.lit { background: #fff; border-color: #555 #eee #eee #555; }
.chart { width: 1099px; height: 249px; margin-left: 101px; }
#chart text { font: 12px "Open Sans", sans-serif; letter-spacing: -0.35px; }

/* taskbar */
.taskbar { display: flex; align-items: center; height: 39px; border-top: 1px solid #777; background: #030202; }
.orb { margin-left: 8px; }
.task { display: flex; align-items: center; justify-content: center; height: 38px; border: 1px solid #8d8d8d; border-radius: 3px; }
.explorer { width: 58px; margin-left: 14px; background: linear-gradient(135deg, #6a6a6a, #2c2c2c 45%, #111 50%, #1c1c1c); }
.fox { margin-left: 18px; }
.chrome { margin-left: 30px; }
.labview { width: 53px; margin-left: 18px; padding-right: 3px; background: linear-gradient(135deg, #c9c9c9, #999 45%, #777 50%, #999); border-color: #ddd; }
.stack { width: 4px; height: 38px; margin-left: 1px; border: 1px solid #999; border-left: 0; border-radius: 0 3px 3px 0; background: #666; }
.lv-num { font: 9px "Liberation Sans", sans-serif; fill: #ddd; }
.tray { display: flex; align-items: center; margin-left: auto; height: 38px; color: #fff; }
.tray svg + svg { margin-left: 14px; }
.tray svg:nth-child(3), .tray svg:nth-child(4) { margin-left: 9px; }
.tray time { width: 76px; margin: 0 -1px 0 3px; text-align: center; line-height: 17px; letter-spacing: -0.45px; }
.peek { width: 14px; height: 38px; border: 1px solid #777; background: linear-gradient(135deg, #555, #1a1a1a 50%, #000); }
```
FILE: chart.js
```js
// Strip chart "Sensor data": samples are [x, y] in thirds of a screen pixel.
const svg = document.getElementById('chart');
const NS = 'http://www.w3.org/2000/svg';
function add(tag, attrs, text) {
  const el = document.createElementNS(NS, tag);
  for (const k in attrs) el.setAttribute(k, attrs[k]);
  if (text) el.textContent = text;
  svg.appendChild(el);
  return el;
}
const left = 67, right = 1059, top0 = 8, bottom = 184;
add('rect', {x: left, y: top0, width: right - left, height: bottom - top0, fill: '#fff'});
const yOf = v => Math.round(183.3 - v * 1.4583) + 0.5;
const xTicks = [];
for (let i = 0; i <= 21; i++) xTicks.push(Math.round(90 + i * 46.08) + 0.5);
const line = (x1, y1, x2, y2, c) => add('line', {x1, y1, x2, y2, stroke: c, 'shape-rendering': 'crispEdges'});

for (let v = 5; v < 120; v += 5) if (v % 20) line(left, yOf(v), right, yOf(v), '#f1f1f1');
for (let x = 78.5; x < right; x += 11.52) line(x, top0, x, bottom, '#f1f1f1');
for (let v = 20; v < 120; v += 20) line(left, yOf(v), right, yOf(v), '#dcdcdc');
xTicks.slice(0, -1).forEach(x => line(x, top0, x, bottom, '#dcdcdc'));
line(left - 1, top0 - .5, right, top0 - .5, '#555');
line(left - .5, top0, left - .5, bottom, '#555');

for (let v = 0; v <= 120; v += 20) {
  line(60, yOf(v), 65, yOf(v), '#000');
  add('text', {x: 58, y: yOf(v) + 4.5, 'text-anchor': 'end'}, String(v));
}
const hours = ['', '20:34', '20:34', '20:34', '20:35', '20:35', '20:35', '20:36', '20:36', '20:36', '20:37',
  '20:37', '20:37', '20:38', '20:38', '20:38', '20:39', '20:39', '20:39', '20:40', '20:40', '20:40'];
function tick(x, label) {
  line(x, 186, x, 191, '#000');
  if (!label) return;
  add('text', {x: x - 1.5, y: 203, 'text-anchor': 'middle'}, label);
  add('text', {x: x - 1.5, y: 218, 'text-anchor': 'middle'}, '11/17');
}
tick(67.5, '20:33');
xTicks.forEach((x, i) => tick(x, hours[i]));
add('text', {x: 562.5, y: 235, 'text-anchor': 'middle'}, 'Time');
add('text', {x: 0, y: 0, transform: 'translate(33 97) rotate(-90)', 'text-anchor': 'middle'}, 'Data');

const burst = '653,143 658,284 667,217 674,164 680,185 688,203 694,290 700,143 709,278 715,140 721,287 730,140 736,287 743,185 748,146 757,284 763,140 769,247 778,158 788,200 793,566 799,640 808,638 814,620 820,530 826,434 835,574 841,640 848,635 856,616 862,500 868,440 877,616 883,640 890,629 898,566 904,434 910,601 916,464 926,464 931,629 937,640 947,635 952,539 958,640 967,545 973,640 980,638 986,626 994,593 1000,598 1006,605 1016,608 1021,635 1027,640';
const middle = '53,206 58,430 67,320 74,494 80,281 88,320 94,383 100,440 109,485 115,515 121,533 128,347 137,431 142,548 148,548 157,527 163,535 170,545 178,548 184,236 190,260 199,347 205,446 211,506 217,278 227,287 232,542 238,548 248,530 254,536 260,545 269,545 275,488 281,323 286,254 295,242 302,242 307,314 317,545 323,545 329,476 337,545 343,239 350,245 358,332 365,239 370,233 377,254 385,359 391,473 397,524 406,398 416,425 422,545 428,374 435,380 442,371 448,530 454,548 463,539 470,467 475,302 484,545 490,518 497,362 505,314 511,440 518,320 526,533 532,548 539,542 544,503 553,335 560,329 566,536 575,455 580,542 587,452 595,293 602,419 607,521 613,389 622,296 629,485 634,550 644,548 649,530 655,550 664,308 670,443 676,550 685,545 691,524 697,404 703,287 712,449 718,550';
const tail = '64,335 73,548 79,548 85,539 94,449 100,550 106,548 112,539 121,479 127,311 133,335 142,416 148,308 154,542 163,497 169,338 175,302 184,503 190,550 196,548 202,536 211,470 217,308 223,416 232,338 238,296 244,542 253,509 259,371 268,548 274,509 281,326 289,233 295,338 301,491 310,526 316,422 322,526 331,419 337,170 343,74 352,173 358,515 364,473 370,524 379,446 385,200 391,365 400,152 406,518 412,341 421,509 427,83 434,104 439,71 448,158 454,389 460,509 469,509 475,89 481,263 490,101 496,524 502,485 511,515 517,494 523,266 529,83 538,128 544,359 550,503';
const pts = [];
const push = (x, y) => pts.push([Math.floor(x / 3 - 285) + 0.5, Math.min(Math.floor(y / 3 - 631), 182) + 0.5]);
const flat = (a, b) => { for (let x = a; x < b - 2; x += 6.95) push(x, 2441); push(b, 2441); };
const run = (s, ox, oy) => s.split(' ').forEach(p => { const [x, y] = p.split(','); push(+x + ox, +y + oy); });
flat(1058, 1458);
run(burst, 810, 1800);
flat(1843, 2868);
run(middle, 2820, 1890);
run(tail, 3480, 1890);
add('polyline', {points: pts.map(p => p.join(',')).join(' '), fill: 'none', stroke: '#14f014', 'shape-rendering': 'crispEdges'});
add('path', {
  d: pts.map(([x, y]) => `M${x - 2} ${y - 2}h4v${Math.min(4, bottom - y + 1.5)}h-4z`).join(''),
  fill: 'none', stroke: '#14ff14', 'shape-rendering': 'crispEdges'
});
```
